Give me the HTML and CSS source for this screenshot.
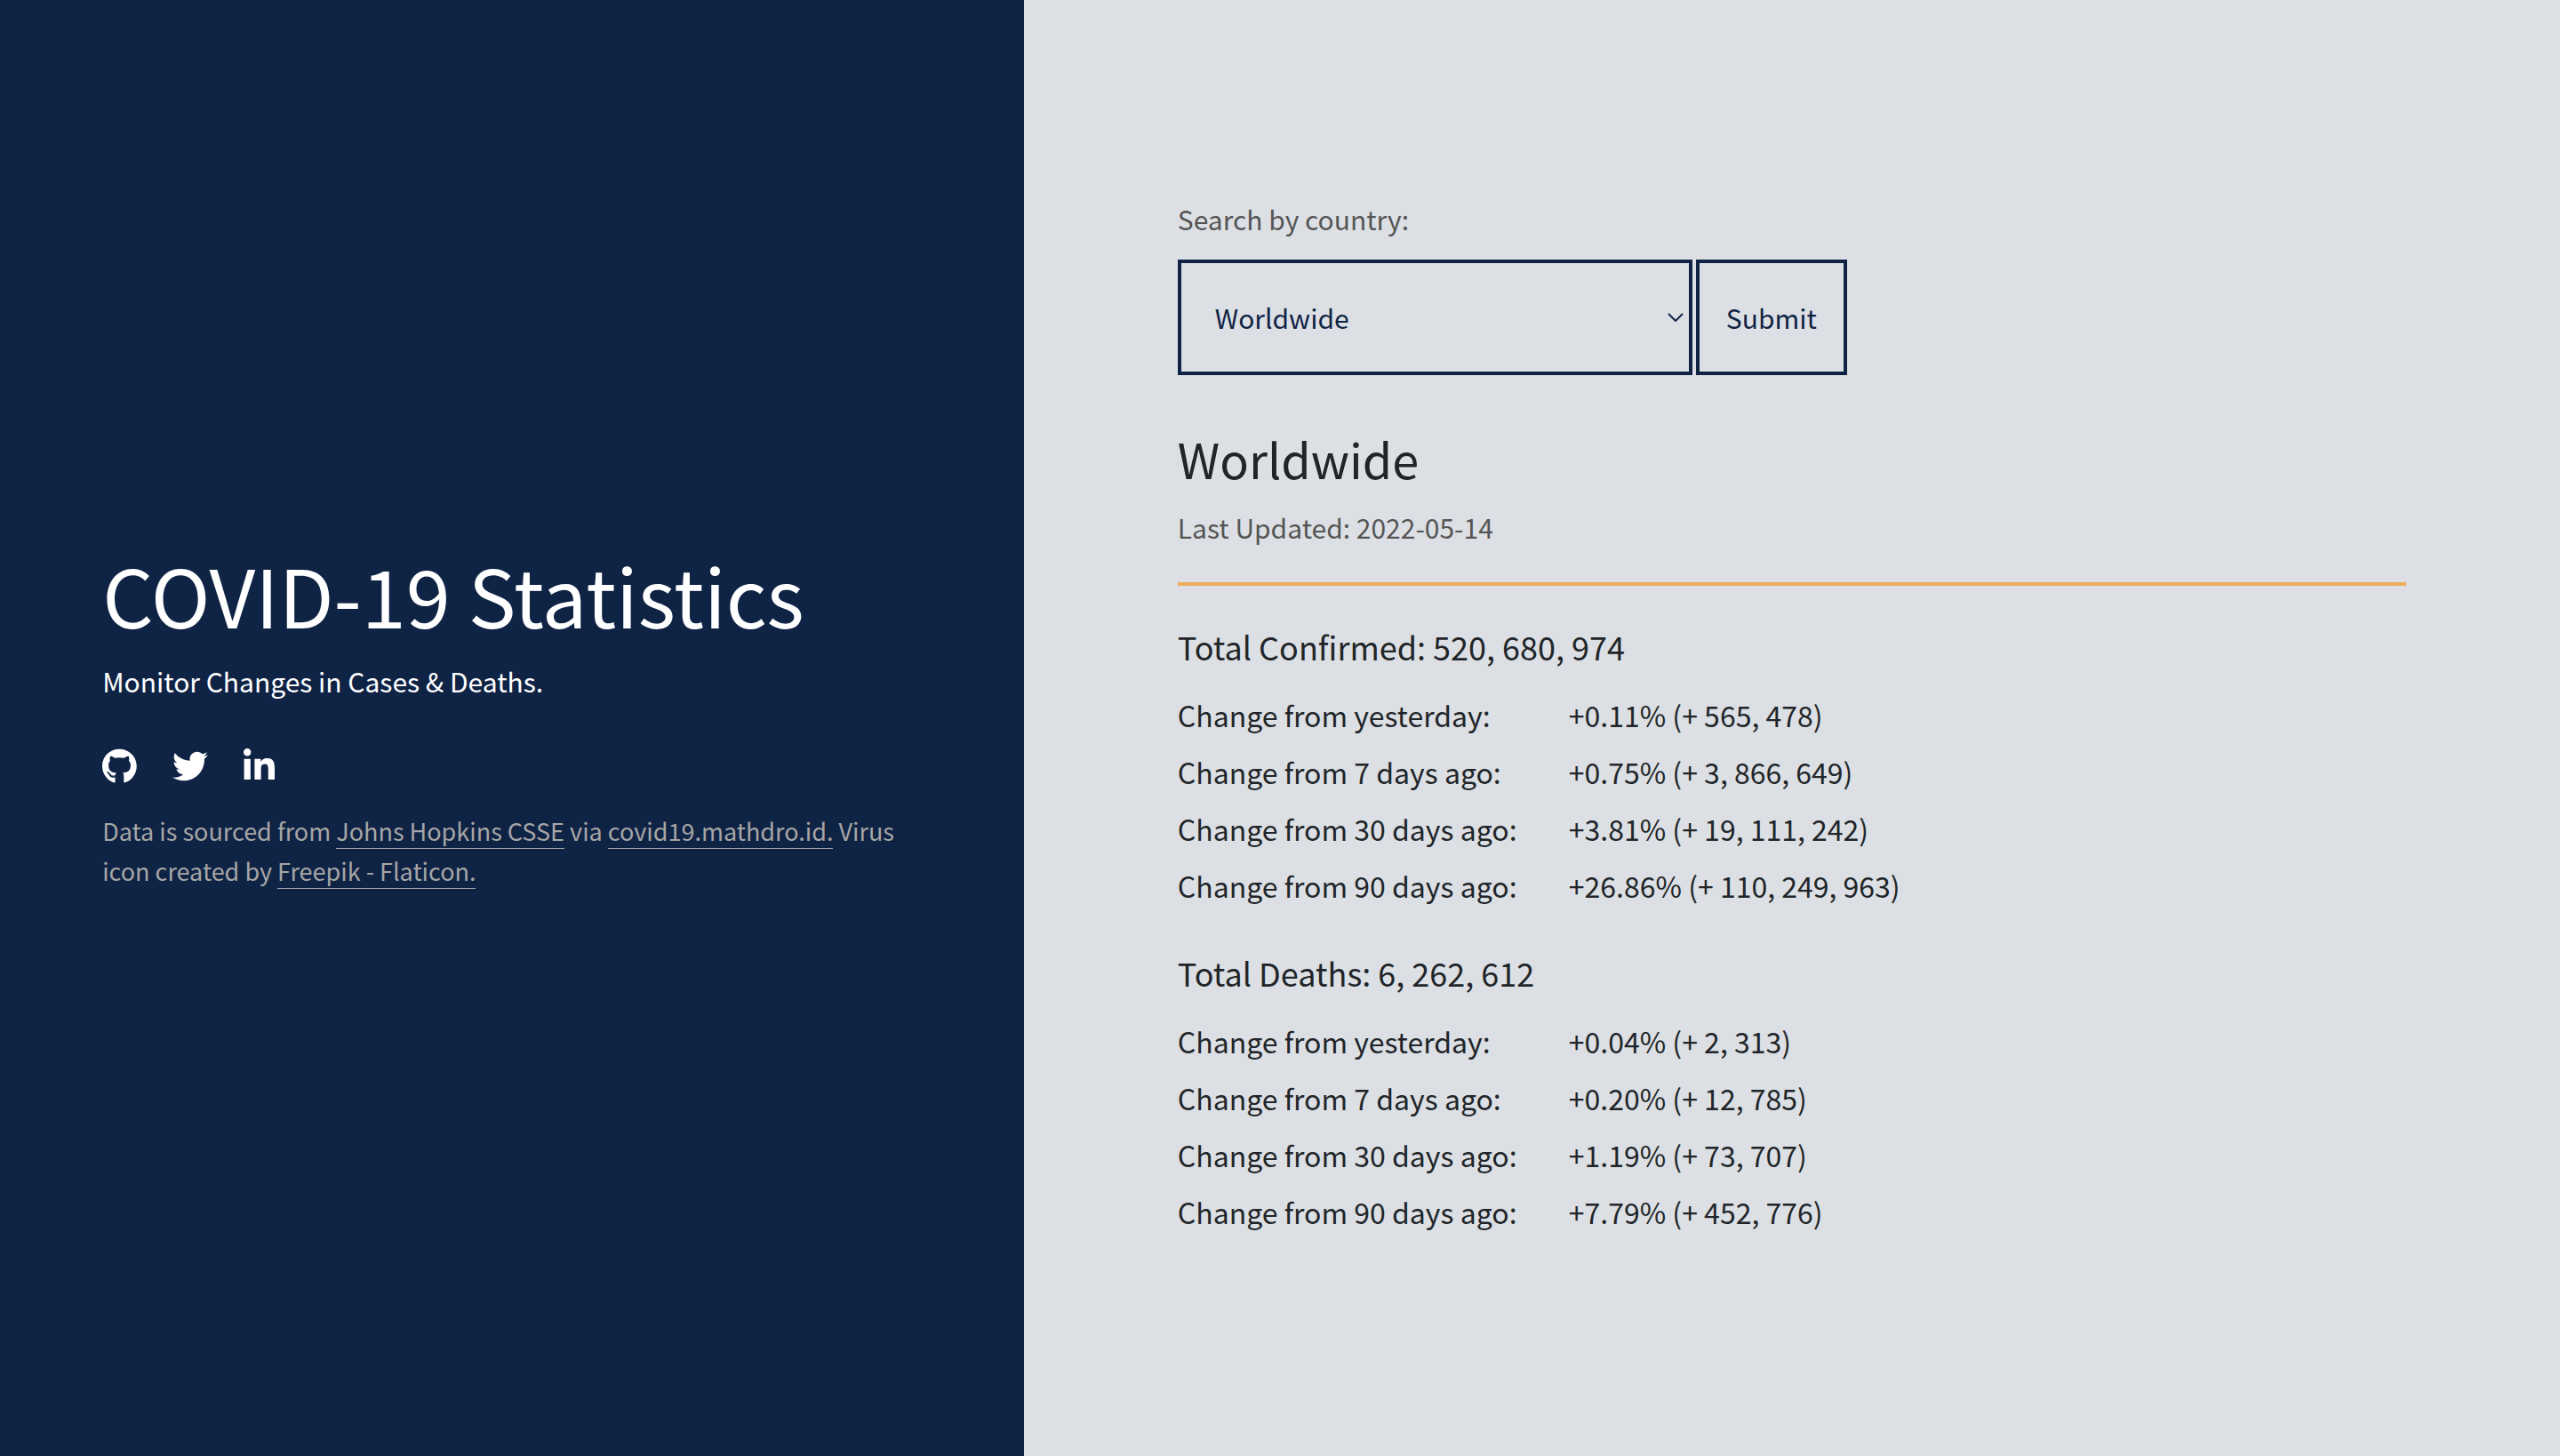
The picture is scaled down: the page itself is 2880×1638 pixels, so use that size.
FILE: index.html
```html
<!DOCTYPE html>
<html lang="en">
<head>
<meta charset="utf-8">
<title>COVID-19 Statistics</title>
<link rel="stylesheet" href="styles.css">
</head>
<body>
<div class="page">
  <header class="intro">
    <h1 class="title">COVID-19 Statistics</h1>
    <p class="tagline">Monitor Changes in Cases &amp; Deaths.</p>
    <nav class="social">
      <a href="#" aria-label="GitHub"><svg viewBox="0 0 496 512"><path d="M165.900 397.400c0 2-2.300 3.600-5.200 3.600-3.300.3-5.600-1.300-5.600-3.600 0-2 2.300-3.600 5.200-3.600 3-.3 5.600 1.300 5.600 3.600zm-31.100-4.500c-.7 2 1.300 4.300 4.300 4.900 2.600 1 5.600 0 6.200-2s-1.300-4.300-4.300-5.200c-2.600-.7-5.500.3-6.200 2.300zm44.200-1.700c-2.900.7-4.900 2.600-4.600 4.900.3 2 2.900 3.300 5.900 2.600 2.900-.7 4.900-2.600 4.600-4.600-.3-1.900-3-3.200-5.900-2.900zM244.800 8C106.100 8 0 113.300 0 252c0 110.900 69.800 205.800 169.500 239.200 12.800 2.300 17.300-5.600 17.300-12.100 0-6.200-.3-40.400-.3-61.400 0 0-70 15-84.700-29.800 0 0-11.400-29.100-27.800-36.600 0 0-22.900-15.700 1.600-15.400 0 0 24.900 2 38.600 25.800 21.900 38.600 58.600 27.500 72.900 20.900 2.300-16 8.800-27.100 16-33.700-55.900-6.200-112.300-14.300-112.300-110.500 0-27.500 7.600-41.300 23.600-58.900-2.600-6.500-11.100-33.300 2.600-67.900 20.900-6.500 69 27 69 27 20-5.600 41.500-8.500 62.800-8.500s42.800 2.900 62.800 8.500c0 0 48.100-33.600 69-27 13.700 34.700 5.200 61.400 2.600 67.900 16 17.700 25.800 31.500 25.800 58.900 0 96.500-58.900 104.200-114.800 110.500 9.200 7.900 17 22.900 17 46.400 0 33.700-.3 75.400-.3 83.600 0 6.500 4.600 14.400 17.300 12.100C428.200 457.800 496 362.900 496 252 496 113.300 383.500 8 244.800 8z"/></svg></a>
      <a href="#" aria-label="Twitter"><svg viewBox="0 0 512 512"><path d="M459.370 151.716c.325 4.548.325 9.097.325 13.645 0 138.720-105.583 298.558-298.558 298.558-59.452 0-114.680-17.219-161.137-47.106 8.447.974 16.568 1.299 25.340 1.299 49.055 0 94.213-16.568 130.274-44.832-46.132-.975-84.792-31.188-98.112-72.772 6.498.974 12.995 1.624 19.818 1.624 9.421 0 18.843-1.300 27.614-3.573-48.081-9.747-84.143-51.980-84.143-102.985v-1.299c13.969 7.797 30.214 12.670 47.431 13.319-28.264-18.843-46.781-51.005-46.781-87.391 0-19.492 5.197-37.360 14.294-52.954 51.655 63.675 129.300 105.258 216.365 109.807-1.624-7.797-2.599-15.918-2.599-24.040 0-57.828 46.782-104.934 104.934-104.934 30.213 0 57.502 12.670 76.670 33.137 23.715-4.548 46.456-13.320 66.599-25.340-7.798 24.366-24.366 44.833-46.132 57.827 21.117-2.273 41.584-8.122 60.426-16.243-14.292 20.791-32.161 39.308-52.628 54.253z"/></svg></a>
      <a href="#" aria-label="LinkedIn"><svg viewBox="0 0 448 512"><path d="M100.280 448H7.400V148.900h92.880zM53.790 108.100C24.090 108.100 0 83.500 0 53.800a53.790 53.790 0 0 1 107.580 0c0 29.700-24.100 54.300-53.790 54.300zM447.900 448h-92.680V302.400c0-34.700-.7-79.200-48.290-79.200-48.290 0-55.690 37.700-55.690 76.700V448h-92.780V148.900h89.080v40.800h1.300c12.400-23.500 42.690-48.300 87.880-48.300 94 0 111.280 61.900 111.280 142.300V448z"/></svg></a>
    </nav>
    <p class="credits">Data is sourced from <a href="#">Johns Hopkins CSSE</a> via <a href="#">covid19.mathdro.id.</a> Virus icon created by <a href="#">Freepik - Flaticon.</a></p>
  </header>
  <main class="content">
    <form class="search">
      <label class="muted" for="country">Search by country:</label>
      <div class="controls">
        <div class="picker">
          <select id="country" class="country"><option>Worldwide</option></select>
          <svg class="chevron" viewBox="0 0 18 10"><path d="M1 1l8 8 8-8"/></svg>
        </div>
        <button class="submit" type="button">Submit</button>
      </div>
    </form>
    <h2 class="region">Worldwide</h2>
    <p class="updated muted">Last Updated: 2022-05-14</p>
    <section class="stats">
      <h3 class="total">Total Confirmed: 520, 680, 974</h3>
      <table class="changes">
        <tr><th scope="row">Change from yesterday:</th><td>+0.11% (+ 565, 478)</td></tr>
        <tr><th scope="row">Change from 7 days ago:</th><td>+0.75% (+ 3, 866, 649)</td></tr>
        <tr><th scope="row">Change from 30 days ago:</th><td>+3.81% (+ 19, 111, 242)</td></tr>
        <tr><th scope="row">Change from 90 days ago:</th><td>+26.86% (+ 110, 249, 963)</td></tr>
      </table>
    </section>
    <section class="stats">
      <h3 class="total">Total Deaths: 6, 262, 612</h3>
      <table class="changes">
        <tr><th scope="row">Change from yesterday:</th><td>+0.04% (+ 2, 313)</td></tr>
        <tr><th scope="row">Change from 7 days ago:</th><td>+0.20% (+ 12, 785)</td></tr>
        <tr><th scope="row">Change from 30 days ago:</th><td>+1.19% (+ 73, 707)</td></tr>
        <tr><th scope="row">Change from 90 days ago:</th><td>+7.79% (+ 452, 776)</td></tr>
      </table>
    </section>
  </main>
</div>
</body>
</html>
```
FILE: styles.css
```css
* { box-sizing: border-box; margin: 0; padding: 0; }

body {
  font-family: "Noto Sans CJK SC", "Noto Sans", sans-serif;
  font-size: 30px;
  line-height: 48px;
  color: #212529;
  background: #dce0e4;
}

.page {
  display: grid;
  grid-template-columns: 40% 60%;
  min-height: 100vh;
}

.intro {
  display: flex;
  flex-direction: column;
  justify-content: center;
  padding: 0 10% 28px;
  color: #fff;
  background: #0f2345;
}

.title { font-size: 90px; font-weight: 400; line-height: 120px; }
.tagline { margin-top: 14px; }

.social { display: flex; gap: 40px; margin: 52px 0 30px; }
.social a { display: flex; color: #fff; }
.social svg { display: block; height: 40px; fill: currentColor; }

.credits { font-size: 27px; line-height: 45px; color: #a6a6a6; }
.credits a { color: inherit; text-decoration: none; border-bottom: 1px solid currentColor; }

.content {
  display: flex;
  flex-direction: column;
  justify-content: center;
  padding: 0 10% 22px;
}

.muted { color: #555; }

.search { display: flex; flex-direction: column; gap: 22px; }
.controls { display: flex; gap: 4px; }
.picker { position: relative; width: 579px; }

.country, .submit {
  height: 130px;
  font: inherit;
  color: #0f2345;
  background: transparent;
  border: 4px solid #0f2345;
  border-radius: 0;
}
.country { appearance: none; width: 100%; padding: 0 38px; }
.submit { padding: 0 30px; }

.chevron {
  position: absolute;
  right: 10px;
  top: 60px;
  width: 18px;
  fill: none;
  stroke: #0f2345;
  stroke-width: 2;
}

.region { margin-top: 58px; font-size: 54px; font-weight: 400; line-height: 72px; }
.updated { padding-bottom: 38px; margin: 17px 0 2px; border-bottom: 4px solid #f0ad5c; }

.stats { margin-top: 42px; }
.total { font-size: 36px; font-weight: 400; line-height: 48px; margin-bottom: 21px; }
.changes { border-spacing: 0; font-size: 32px; line-height: 64px; }
.changes th { width: 440px; font-weight: 400; text-align: left; }
```
